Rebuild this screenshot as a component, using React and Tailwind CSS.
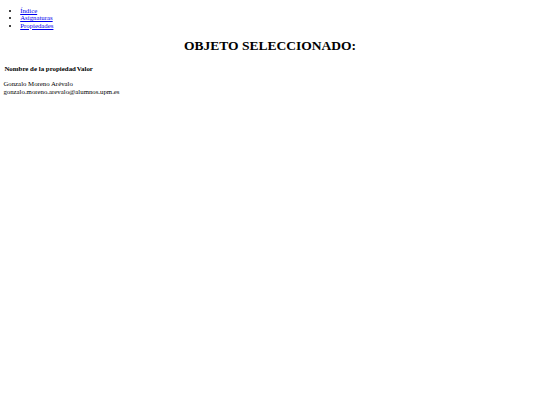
export default function App() {
  return (
    <div className="min-h-[405px] w-[540px] bg-white text-black" style={{ fontFamily: '"Liberation Serif", "Times New Roman", serif' }}>
      <div className="px-[3.4px] pt-[6.7px] text-[6.8px] leading-[7.6px]">
        <ul className="list-disc pl-[16.8px]">
          <li><a href="#" className="text-[#0000ee] underline">Índice</a></li>
          <li><a href="#" className="text-[#0000ee] underline">Asignaturas</a></li>
          <li><a href="#" className="text-[#0000ee] underline">Propiedades</a></li>
        </ul>
        <h1 className="mt-[9px] mb-[11px] text-center text-[13.5px] leading-[15.5px] font-bold">OBJETO SELECCIONADO:</h1>
        <table className="border-separate border-spacing-[0.8px]">
          <thead>
            <tr>
              <th className="py-[0.4px] pl-[1px] pr-[0.4px] text-left text-[6.9px] font-bold">Nombre de la propiedad</th>
              <th className="p-[0.4px] text-left text-[6.9px] font-bold">Valor</th>
            </tr>
          </thead>
        </table>
        <div className="mt-[7px]">
          <div>Gonzalo Moreno Arévalo</div>
          <div>gonzalo.moreno.arevalo@alumnos.upm.es</div>
        </div>
      </div>
    </div>
  );
}
